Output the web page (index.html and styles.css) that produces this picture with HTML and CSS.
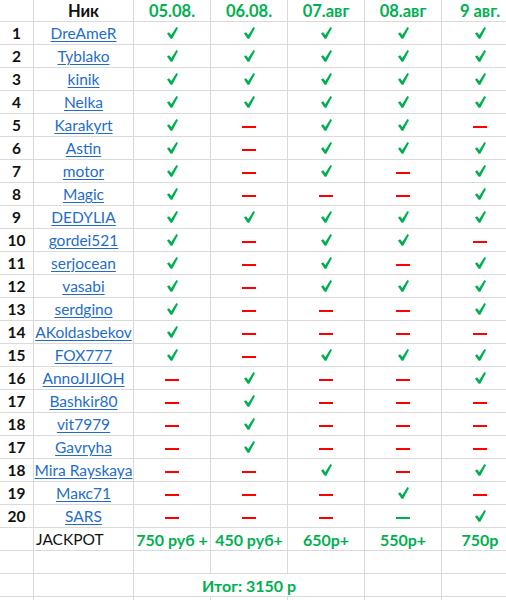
FILE: index.html
```html
<!DOCTYPE html>
<html lang="ru">
<head>
<meta charset="utf-8">
<title>Таблица</title>
<link rel="stylesheet" href="styles.css">
</head>
<body>
<svg class="defs" aria-hidden="true"><symbol id="chk" viewBox="0 0 11 12"><path d="M0 6.5 L2.1 5.3 L4.3 8.1 L9.4 0 L11 1 L5.3 11.8 L3.6 11.8 Z"/></symbol></svg>
<div class="sheet">
  <div class="c"></div><div class="c hd nick">Ник</div><div class="c hd">05.08.</div><div class="c hd">06.08.</div><div class="c hd">07.авг</div><div class="c hd">08.авг</div><div class="c hd">9 авг.</div>

  <div class="c num">1</div><div class="c name"><a>DreAmeR</a></div><div class="c"><svg class="ck"><use href="#chk"/></svg></div><div class="c"><svg class="ck"><use href="#chk"/></svg></div><div class="c"><svg class="ck"><use href="#chk"/></svg></div><div class="c"><svg class="ck"><use href="#chk"/></svg></div><div class="c"><svg class="ck"><use href="#chk"/></svg></div>
  <div class="c num">2</div><div class="c name"><a>Tyblako</a></div><div class="c"><svg class="ck"><use href="#chk"/></svg></div><div class="c"><svg class="ck"><use href="#chk"/></svg></div><div class="c"><svg class="ck"><use href="#chk"/></svg></div><div class="c"><svg class="ck"><use href="#chk"/></svg></div><div class="c"><svg class="ck"><use href="#chk"/></svg></div>
  <div class="c num">3</div><div class="c name"><a>kinik</a></div><div class="c"><svg class="ck"><use href="#chk"/></svg></div><div class="c"><svg class="ck"><use href="#chk"/></svg></div><div class="c"><svg class="ck"><use href="#chk"/></svg></div><div class="c"><svg class="ck"><use href="#chk"/></svg></div><div class="c"><svg class="ck"><use href="#chk"/></svg></div>
  <div class="c num">4</div><div class="c name"><a>Nelka</a></div><div class="c"><svg class="ck"><use href="#chk"/></svg></div><div class="c"><svg class="ck"><use href="#chk"/></svg></div><div class="c"><svg class="ck"><use href="#chk"/></svg></div><div class="c"><svg class="ck"><use href="#chk"/></svg></div><div class="c"><svg class="ck"><use href="#chk"/></svg></div>
  <div class="c num">5</div><div class="c name"><a>Karakyrt</a></div><div class="c"><svg class="ck"><use href="#chk"/></svg></div><div class="c"><i class="no"></i></div><div class="c"><svg class="ck"><use href="#chk"/></svg></div><div class="c"><svg class="ck"><use href="#chk"/></svg></div><div class="c"><i class="no"></i></div>
  <div class="c num">6</div><div class="c name"><a>Astin</a></div><div class="c"><svg class="ck"><use href="#chk"/></svg></div><div class="c"><i class="no"></i></div><div class="c"><svg class="ck"><use href="#chk"/></svg></div><div class="c"><svg class="ck"><use href="#chk"/></svg></div><div class="c"><svg class="ck"><use href="#chk"/></svg></div>
  <div class="c num">7</div><div class="c name"><a>motor</a></div><div class="c"><svg class="ck"><use href="#chk"/></svg></div><div class="c"><i class="no"></i></div><div class="c"><svg class="ck"><use href="#chk"/></svg></div><div class="c"><i class="no"></i></div><div class="c"><svg class="ck"><use href="#chk"/></svg></div>
  <div class="c num">8</div><div class="c name"><a>Magic</a></div><div class="c"><svg class="ck"><use href="#chk"/></svg></div><div class="c"><i class="no"></i></div><div class="c"><i class="no"></i></div><div class="c"><i class="no"></i></div><div class="c"><svg class="ck"><use href="#chk"/></svg></div>
  <div class="c num">9</div><div class="c name"><a>DEDYLIA</a></div><div class="c"><svg class="ck"><use href="#chk"/></svg></div><div class="c"><svg class="ck"><use href="#chk"/></svg></div><div class="c"><svg class="ck"><use href="#chk"/></svg></div><div class="c"><svg class="ck"><use href="#chk"/></svg></div><div class="c"><svg class="ck"><use href="#chk"/></svg></div>
  <div class="c num">10</div><div class="c name"><a>gordei521</a></div><div class="c"><svg class="ck"><use href="#chk"/></svg></div><div class="c"><i class="no"></i></div><div class="c"><svg class="ck"><use href="#chk"/></svg></div><div class="c"><svg class="ck"><use href="#chk"/></svg></div><div class="c"><i class="no"></i></div>
  <div class="c num">11</div><div class="c name"><a>serjocean</a></div><div class="c"><svg class="ck"><use href="#chk"/></svg></div><div class="c"><i class="no"></i></div><div class="c"><svg class="ck"><use href="#chk"/></svg></div><div class="c"><i class="no"></i></div><div class="c"><svg class="ck"><use href="#chk"/></svg></div>
  <div class="c num">12</div><div class="c name"><a>vasabi</a></div><div class="c"><svg class="ck"><use href="#chk"/></svg></div><div class="c"><i class="no"></i></div><div class="c"><svg class="ck"><use href="#chk"/></svg></div><div class="c"><svg class="ck"><use href="#chk"/></svg></div><div class="c"><svg class="ck"><use href="#chk"/></svg></div>
  <div class="c num">13</div><div class="c name"><a>serdgino</a></div><div class="c"><svg class="ck"><use href="#chk"/></svg></div><div class="c"><i class="no"></i></div><div class="c"><i class="no"></i></div><div class="c"><i class="no"></i></div><div class="c"><svg class="ck"><use href="#chk"/></svg></div>
  <div class="c num">14</div><div class="c name"><a>AKoldasbekov</a></div><div class="c"><svg class="ck"><use href="#chk"/></svg></div><div class="c"><i class="no"></i></div><div class="c"><i class="no"></i></div><div class="c"><i class="no"></i></div><div class="c"><i class="no"></i></div>
  <div class="c num">15</div><div class="c name"><a>FOX777</a></div><div class="c"><svg class="ck"><use href="#chk"/></svg></div><div class="c"><i class="no"></i></div><div class="c"><svg class="ck"><use href="#chk"/></svg></div><div class="c"><svg class="ck"><use href="#chk"/></svg></div><div class="c"><svg class="ck"><use href="#chk"/></svg></div>
  <div class="c num">16</div><div class="c name"><a>AnnoJIJIOH</a></div><div class="c"><i class="no"></i></div><div class="c"><svg class="ck"><use href="#chk"/></svg></div><div class="c"><i class="no"></i></div><div class="c"><i class="no"></i></div><div class="c"><svg class="ck"><use href="#chk"/></svg></div>
  <div class="c num">17</div><div class="c name"><a>Bashkir80</a></div><div class="c"><i class="no"></i></div><div class="c"><svg class="ck"><use href="#chk"/></svg></div><div class="c"><i class="no"></i></div><div class="c"><i class="no"></i></div><div class="c"><i class="no"></i></div>
  <div class="c num">18</div><div class="c name"><a>vit7979</a></div><div class="c"><i class="no"></i></div><div class="c"><svg class="ck"><use href="#chk"/></svg></div><div class="c"><i class="no"></i></div><div class="c"><i class="no"></i></div><div class="c"><i class="no"></i></div>
  <div class="c num">17</div><div class="c name"><a>Gavryha</a></div><div class="c"><i class="no"></i></div><div class="c"><svg class="ck"><use href="#chk"/></svg></div><div class="c"><i class="no"></i></div><div class="c"><i class="no"></i></div><div class="c"><i class="no"></i></div>
  <div class="c num">18</div><div class="c name"><a>Mira Rayskaya</a></div><div class="c"><i class="no"></i></div><div class="c"><i class="no"></i></div><div class="c"><svg class="ck"><use href="#chk"/></svg></div><div class="c"><i class="no"></i></div><div class="c"><svg class="ck"><use href="#chk"/></svg></div>
  <div class="c num">19</div><div class="c name"><a>Макс71</a></div><div class="c"><i class="no"></i></div><div class="c"><i class="no"></i></div><div class="c"><i class="no"></i></div><div class="c"><svg class="ck"><use href="#chk"/></svg></div><div class="c"><i class="no"></i></div>
  <div class="c num">20</div><div class="c name"><a>SARS</a></div><div class="c"><i class="no"></i></div><div class="c"><i class="no"></i></div><div class="c"><i class="no"></i></div><div class="c"><i class="no g"></i></div><div class="c"><svg class="ck"><use href="#chk"/></svg></div>

  <div class="c"></div><div class="c jp">JACKPOT</div><div class="c amt">750 руб +</div><div class="c amt">450 руб+</div><div class="c amt">650р+</div><div class="c amt">550р+</div><div class="c amt">750р</div>
  <div class="c"></div><div class="c"></div><div class="c"></div><div class="c"></div><div class="c"></div><div class="c"></div><div class="c"></div>
  <div class="c"></div><div class="c"></div><div class="c amt total">Итог: 3150 р</div><div class="c"></div><div class="c"></div>
  <div class="c"></div><div class="c"></div><div class="c"></div><div class="c"></div><div class="c"></div><div class="c"></div><div class="c"></div>
</div>
</body>
</html>
```
FILE: styles.css
```css
html, body {
  margin: 0;
  padding: 0;
  background: #ffffff;
  overflow: hidden;
}

body {
  font-family: Lato, "Liberation Sans", sans-serif;
  color: #111111;
}

.defs {
  position: absolute;
  width: 0;
  height: 0;
  overflow: hidden;
}

.sheet {
  display: grid;
  grid-template-columns: 34px 100px 77px 77px 77px 77px 77px;
  grid-template-rows: 22px;
  grid-auto-rows: 23px;
  width: 519px;
}

.c {
  box-sizing: border-box;
  border-right: 1px solid #dadada;
  border-bottom: 1px solid #dadada;
  display: flex;
  align-items: center;
  justify-content: center;
  white-space: nowrap;
  min-width: 0;
}

.hd {
  font-weight: 700;
  font-size: 16.5px;
  color: #00b050;
}

.hd.nick {
  color: #111111;
}

.num {
  font-weight: 700;
  font-size: 15.5px;
}

.name a {
  color: #1f6dc9;
  font-size: 15.5px;
  text-decoration: underline;
  text-underline-offset: 2px;
}

.ck {
  width: 11px;
  height: 12px;
  fill: #00b050;
}

.no {
  display: block;
  width: 14px;
  height: 2px;
  margin-top: 3px;
  background: #ff0000;
}

.no.g {
  background: #00b050;
}

.jp {
  justify-content: flex-start;
  padding-left: 2px;
  font-size: 15.5px;
}

.amt {
  font-weight: 700;
  font-size: 16px;
  color: #00b050;
}

.total {
  grid-column: span 3;
}
```
